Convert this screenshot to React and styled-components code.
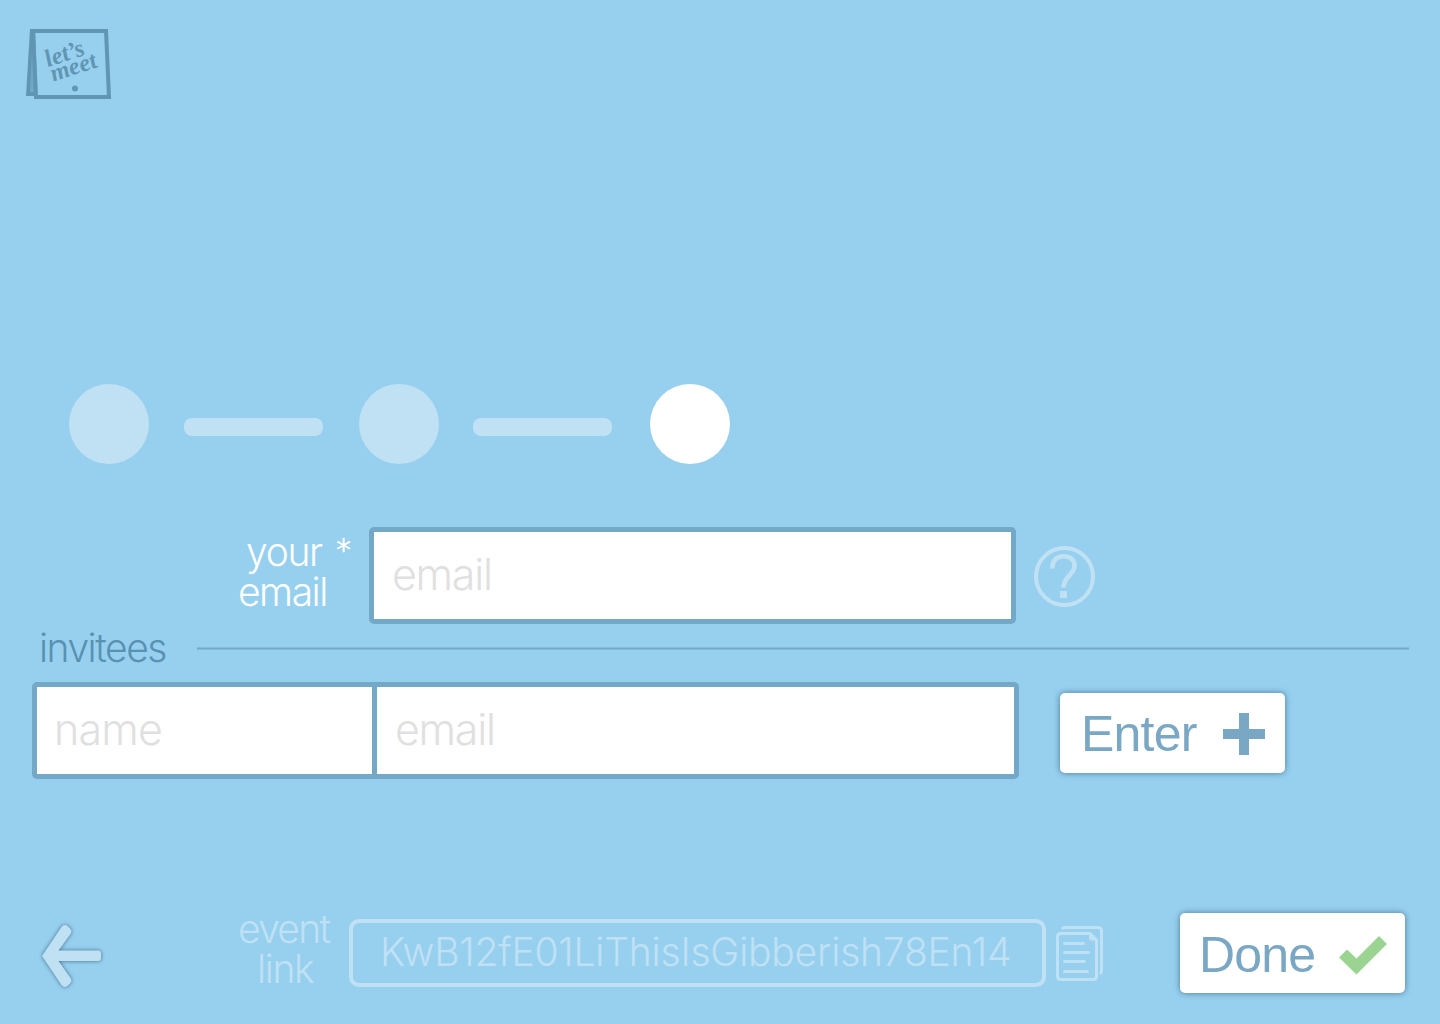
import React from "react";
import styled, { createGlobalStyle } from "styled-components";

const color = {
  sky: "#97d0ef",
  pale: "#c0e1f4",
  edge: "#73a8c6",
  ink: "#5891b2",
  button: "#7aa8c4",
  hint: "#e0e0e0",
  check: "#9bd490",
};

const GlobalStyle = createGlobalStyle`
  * { box-sizing: border-box; }
  body { margin: 0; background: ${color.sky}; }
`;

const Page = styled.main`
  width: 1440px;
  height: 1024px;
  overflow: hidden;
  display: flex;
  flex-direction: column;
  background: ${color.sky};
  font-family: Inter, "Liberation Sans", sans-serif;
  font-weight: 285;
`;

const Header = styled.header`
  height: 384px;
  padding: 24px 0 0 20px;
`;

const Steps = styled.nav`
  height: 143px;
  padding-left: 69px;
  display: flex;
  align-items: flex-start;
`;

const Step = styled.span`
  width: 80px;
  height: 80px;
  border-radius: 50%;
  background: ${(p) => (p.$active ? "#fff" : color.pale)};
`;

const StepBar = styled.span`
  width: 139px;
  height: 18px;
  margin: 34px ${(p) => p.$after}px 0 ${(p) => p.$before}px;
  border-radius: 8px;
  background: ${color.pale};
`;

const Row = styled.section`
  display: flex;
  align-items: flex-start;
  height: ${(p) => p.$height}px;
  padding-left: ${(p) => p.$left}px;
`;

const Label = styled.div`
  width: ${(p) => p.$width}px;
  padding-top: ${(p) => p.$top}px;
  color: ${(p) => p.$color};
  font-size: 39px;
  line-height: 40px;
  white-space: pre;
`;

const Line = styled.div`
  height: 40px;
  padding-left: ${(p) => p.$indent || 0}px;
  letter-spacing: ${(p) => p.$track || 0}px;
`;

const Star = styled.span`
  margin-left: 13px;
  font-size: 35px;
  line-height: 1;
  vertical-align: 2px;
`;

const Fields = styled.div`
  display: flex;
  gap: 5px;
  padding: 5px;
  border-radius: 5px;
  background: ${color.edge};
`;

const Field = styled.input`
  width: ${(p) => p.$width}px;
  height: 87px;
  padding: 0 0 4px ${(p) => p.$inset || 18}px;
  border: 0;
  border-radius: 0;
  outline: 0;
  background: #fff;
  color: ${color.ink};
  font: 300 43px Inter, "Liberation Sans", sans-serif;
  letter-spacing: ${(p) => p.$track || -1.3}px;
  &::placeholder {
    color: ${color.hint};
    opacity: 1;
  }
`;

const Help = styled.button`
  width: 61px;
  height: 61px;
  margin: 19px 0 0 18px;
  padding: 0;
  border: 4px solid ${color.pale};
  border-radius: 50%;
  background: none;
  svg { display: block; }
`;

const Rule = styled.hr`
  width: 1212px;
  height: 3px;
  margin: 19px 0 0;
  border: solid #85bcda;
  border-width: 1px 0;
  background: ${color.edge};
`;

const Action = styled.button`
  display: flex;
  align-items: center;
  width: 225px;
  height: 80px;
  margin: ${(p) => p.$top}px 0 0 ${(p) => p.$left}px;
  padding: 2px 0 0 ${(p) => p.$inset}px;
  border: 0;
  border-radius: 5px;
  background: #fff;
  box-shadow: 0 0 6px rgba(50, 90, 115, 0.75);
  color: ${color.button};
  font: 400 50px "Liberation Sans", Arial, sans-serif;
  letter-spacing: -0.8px;
`;

const ActionText = styled.span`
  width: ${(p) => p.$width}px;
  padding-top: ${(p) => p.$drop || 0}px;
  text-align: left;
  white-space: nowrap;
`;

const Back = styled.button`
  width: 80px;
  height: 80px;
  margin-top: 12px;
  padding: 0;
  border: 0;
  background: none;
  svg {
    display: block;
    filter: drop-shadow(0 0 2px rgba(45, 85, 110, 0.8));
  }
`;

const LinkBox = styled.div`
  width: 697px;
  height: 68px;
  margin-top: 16px;
  padding-left: 27px;
  border: 4px solid ${color.pale};
  border-radius: 10px;
  color: ${color.pale};
  font-size: 39px;
  line-height: 58px;
  letter-spacing: -0.2px;
  white-space: nowrap;
`;

const CopyButton = styled.button`
  margin: 21px 0 0 8px;
  padding: 0;
  border: 0;
  background: none;
  svg { display: block; }
`;

function Logo() {
  return (
    <svg width="96" height="80" viewBox="20 24 96 80" fill="none">
      <path d="M30 29 H35 L37.500 96 H26 Z" fill="#6196b3" />
      <path d="M32 50 H33 L34 92 H30 Z" fill="#70a7c7" />
      <path d="M33 31 H106 L109 97 H36 Z" stroke="#6196b3" strokeWidth="4" />
      <g
        fill="#6196b3"
        fontFamily='"Liberation Serif", "Times New Roman", serif'
        fontStyle="italic"
        fontWeight="700"
        fontSize="24.500"
      >
        <text transform="translate(48 67) rotate(-18) skewX(4)">let’s</text>
        <text transform="translate(53.500 81.500) rotate(-18) skewX(4)">meet</text>
      </g>
      <circle cx="75" cy="88.500" r="3" fill="#6196b3" />
    </svg>
  );
}

function QuestionMark() {
  return (
    <svg width="53" height="53" viewBox="1038 550 53 53" fill="none">
      <path
        d="M1052.300 568.500 C1052.300 560 1057 556.200 1063.500 556.200 C1070 556.200 1074.500 560 1074.500 566 C1074.500 575 1063.500 576 1063.500 587.500"
        stroke={color.pale}
        strokeWidth="4.600"
      />
      <path d="M1060 591 h7 v7 h-7z" fill={color.pale} />
    </svg>
  );
}

function BackArrow() {
  return (
    <svg width="80" height="80" viewBox="32 915 80 80">
      <path
        d="M42 956 L61.500 927 Q64.500 923.500 68 926.500 L70 928.500 Q72.500 931 70.500 934 L58.500 950.500 H98 Q101 950.500 101 953.500 V958 Q101 961 98 961 H58.500 L70.500 978 Q72.500 981 70 983.500 L68 985.500 Q64.500 988.500 61.500 985 Z"
        fill={color.pale}
      />
    </svg>
  );
}

function CopyIcon() {
  return (
    <svg width="50" height="58" viewBox="1054 924 50 58" fill="none" stroke={color.pale} strokeWidth="3">
      <path d="M1062 929 Q1063 927.500 1066 927.500 H1098 Q1101.500 927.500 1101.500 931 V970 Q1101.500 972 1100.500 974" />
      <path d="M1061 933.500 H1090 L1096.500 940 V976 Q1096.500 979.500 1093 979.500 H1061 Q1057.500 979.500 1057.500 976 V937 Q1057.500 933.500 1061 933.500 Z" />
      <path d="M1089 932 L1098 940.500 H1092 Q1089 940.500 1089 937.500 Z" fill={color.pale} stroke="none" />
      <path d="M1064.500 943.500 H1083.500 M1064.500 952.500 H1088.500 M1064.500 961.500 H1084.500 M1064.500 971.500 H1087.500" strokeLinecap="round" />
    </svg>
  );
}

function Plus() {
  return (
    <svg width="42" height="42" viewBox="0 0 42 42">
      <path d="M16 0h10v16h16v10H26v16H16V26H0V16h16z" fill={color.button} />
    </svg>
  );
}

function Check() {
  return (
    <svg width="50" height="44" viewBox="0 -4 50 44">
      <path d="M1 21.500 L9 13.500 L18.500 22.500 L41 0 L49 8 L18.500 38.500 Z" fill={color.check} />
    </svg>
  );
}

export default function App() {
  return (
    <Page>
      <GlobalStyle />
      <Header>
        <Logo />
      </Header>
      <Steps>
        <Step />
        <StepBar $before={35} $after={36} />
        <Step />
        <StepBar $before={34} $after={38} />
        <Step $active />
      </Steps>
      <Row $left={237} $height={101}>
        <Label $width={132} $top={5} $color="#fff">
          <Line $indent={9} $track={-1.3}>
            your<Star>*</Star>
          </Line>
          <Line $indent={1} $track={-1.5}>email</Line>
        </Label>
        <Fields>
          <Field $width={637} placeholder="email" />
        </Fields>
        <Help aria-label="Help">
          <QuestionMark />
        </Help>
      </Row>
      <Row $left={38} $height={54}>
        <Label $width={159} $top={-1} $color={color.ink}>
          <Line $indent={1} $track={-1.5}>invitees</Line>
        </Label>
        <Rule />
      </Row>
      <Row $left={32} $height={221}>
        <Fields>
          <Field $width={335} $track={-0.8} $inset={17} placeholder="name" />
          <Field $width={637} placeholder="email" />
        </Fields>
        <Action $top={11} $left={41} $inset={21}>
          <ActionText $width={142}>Enter</ActionText>
          <Plus />
        </Action>
      </Row>
      <Row $left={32} $height={115}>
        <Back aria-label="Back">
          <BackArrow />
        </Back>
        <Label $width={237} $top={6} $color={color.pale}>
          <Line $indent={126} $track={-1.7}>event</Line>
          <Line $indent={145} $track={-1.4}>link</Line>
        </Label>
        <LinkBox>KwB12fE01LiThisIsGibberish78En14</LinkBox>
        <CopyButton aria-label="Copy link">
          <CopyIcon />
        </CopyButton>
        <Action $top={10} $left={76} $inset={19}>
          <ActionText $width={139} $drop={2}>Done</ActionText>
          <Check />
        </Action>
      </Row>
    </Page>
  );
}
